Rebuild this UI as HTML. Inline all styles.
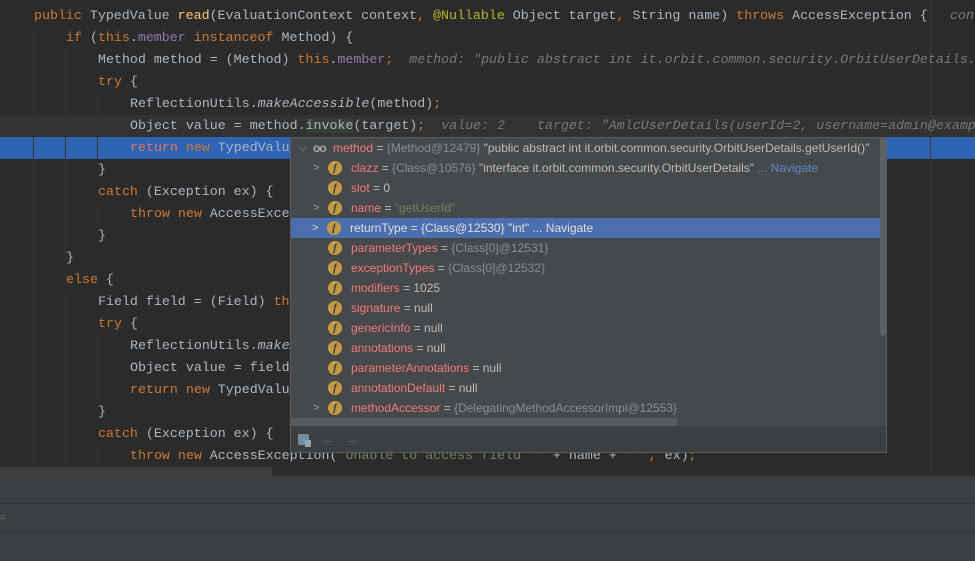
<!DOCTYPE html>
<html><head><meta charset="utf-8"><style>
*{margin:0;padding:0;box-sizing:border-box}
body{width:975px;height:561px;overflow:hidden;background:#2b2b2b;position:relative;font-family:"Liberation Mono",monospace}
.ed{position:absolute;left:0;top:0;width:975px;height:476px;background:#2b2b2b;overflow:hidden}
.ln{position:absolute;left:0;height:22px;line-height:22px;font-size:13.3px;color:#a9b7c6;white-space:pre;width:975px}
.k{color:#cc7832}.m{color:#ffc66d}.f{color:#9876aa}.a{color:#bbb529}.s{color:#6a8759}.i{font-style:italic}
.h{color:#787878;font-style:italic}
.g{position:absolute;width:1px;background:#363636}
.pop{position:absolute;left:290px;top:137px;width:597px;height:316px;background:#46494b;border:1px solid #5a5d5f;font-family:"Liberation Sans",sans-serif;font-size:12px;overflow:hidden}
.r{position:absolute;left:0;width:590px;height:20px;line-height:20px;white-space:nowrap;color:#bbbbbb}
.r .n{color:#f07a78}.r .gr{color:#8a8d8f}.r .gs{color:#6a8759}.r .nav{color:#5a8ac6}
.fi{position:absolute;left:37px;top:3px;width:14px;height:14px;border-radius:50%;background:#c29a44;color:#3c3f41;font-size:11px;line-height:14px;text-align:center;font-family:"Liberation Serif",serif;font-style:italic;font-weight:bold}
.ch{position:absolute;left:22px;top:0;color:#a0a0a0;font-size:11px}
.tx{position:absolute;left:60px}
</style></head><body>
<div class="ed">
<div style="position:absolute;left:0;top:115px;width:975px;height:22px;background:#323232"></div>
<div style="position:absolute;left:0;top:137px;width:975px;height:22px;background:#2f64b5"></div>
<div class="g" style="left:33px;top:27px;height:450px"></div>
<div class="g" style="left:65px;top:49px;height:210px"></div>
<div class="g" style="left:97px;top:93px;height:66px"></div>
<div class="g" style="left:97px;top:203px;height:22px"></div>
<div class="g" style="left:65px;top:291px;height:190px"></div>
<div class="g" style="left:97px;top:335px;height:66px"></div>
<div class="g" style="left:97px;top:445px;height:30px"></div>
<div style="position:absolute;left:930px;top:0;width:1px;height:476px;background:#3d3d3d"></div>
<div class="ln" style="top:5px;left:34px"><span class="k">public </span>TypedValue <span class="m">read</span>(EvaluationContext context<span class="k">, </span><span class="a">@Nullable </span>Object target<span class="k">, </span>String name) <span class="k">throws </span>AccessException {</div>
<div class="ln h" style="top:5px;left:950px">con</div>
<div class="ln" style="top:27px;left:66px"><span class="k">if </span>(<span class="k">this</span>.<span class="f">member </span><span class="k">instanceof </span>Method) {</div>
<div class="ln" style="top:49px;left:98px">Method method = (Method) <span class="k">this</span>.<span class="f">member</span><span class="k">;</span>  <span class="h">method: "public abstract int it.orbit.common.security.OrbitUserDetails.</span></div>
<div class="ln" style="top:71px;left:98px"><span class="k">try </span>{</div>
<div class="ln" style="top:93px;left:130px">ReflectionUtils.<span class="i">makeAccessible</span>(method)<span class="k">;</span></div>
<div class="ln" style="top:115px;left:130px">Object value = method.<span style="background:#344134">invoke</span>(target)<span class="k">;</span>  <span class="h">value: 2    target: "AmlcUserDetails(userId=2, username=admin@examp</span></div>
<div class="ln" style="top:137px;left:130px"><span style="color:#e8735a">return </span><span class="k">new </span>TypedValue(value)<span class="k">;</span></div>
<div class="ln" style="top:159px;left:98px">}</div>
<div class="ln" style="top:181px;left:98px"><span class="k">catch </span>(Exception ex) {</div>
<div class="ln" style="top:203px;left:130px"><span class="k">throw new </span>AccessException(<span class="s">"Unable to access method '" </span>+ name + <span class="s">"'"</span><span class="k">, </span>ex)<span class="k">;</span></div>
<div class="ln" style="top:225px;left:98px">}</div>
<div class="ln" style="top:247px;left:66px">}</div>
<div class="ln" style="top:269px;left:66px"><span class="k">else </span>{</div>
<div class="ln" style="top:291px;left:98px">Field field = (Field) <span class="k">this</span>.<span class="f">member</span><span class="k">;</span></div>
<div class="ln" style="top:313px;left:98px"><span class="k">try </span>{</div>
<div class="ln" style="top:335px;left:130px">ReflectionUtils.<span class="i">makeAccessible</span>(field)<span class="k">;</span></div>
<div class="ln" style="top:357px;left:130px">Object value = field.get(target)<span class="k">;</span></div>
<div class="ln" style="top:379px;left:130px"><span class="k">return new </span>TypedValue(value)<span class="k">;</span></div>
<div class="ln" style="top:401px;left:98px">}</div>
<div class="ln" style="top:423px;left:98px"><span class="k">catch </span>(Exception ex) {</div>
<div class="ln" style="top:445px;left:130px"><span class="k">throw new </span>AccessException(<span class="s">"Unable to access field '" </span>+ name + <span class="s">"'"</span><span class="k">, </span>ex)<span class="k">;</span></div>
<div class="ln" style="top:467px;left:98px">}</div>
<div style="position:absolute;left:0;top:467px;width:272px;height:9px;background:#3e3e3e"></div>
</div>
<div style="position:absolute;left:0;top:476px;width:975px;height:85px;background:#3c3f41"></div>
<div style="position:absolute;left:0;top:503px;width:975px;height:1px;background:#323232"></div>
<div style="position:absolute;left:0;top:531px;width:975px;height:1px;background:#323232"></div>
<div style="position:absolute;left:0;top:512px;color:#6a6a6a;font-size:9px;font-family:'Liberation Sans',sans-serif">≡</div>

<div class="pop">
<div class="r" style="top:0"><span style="position:absolute;left:8px;color:#a0a0a0;font-size:11px">⌵</span><span style="position:absolute;left:22px;color:#aaa;font-size:12px;font-weight:bold;letter-spacing:-1px">oo</span><span class="tx" style="left:42px"><span class="n">method</span> = <span class="gr">{Method@12479}</span> "public abstract int it.orbit.common.security.OrbitUserDetails.getUserId()"</span></div>
<div class="r" style="top:20px"><span class="ch">&gt;</span><span class="fi">f</span><span class="tx"><span class="n">clazz</span> = <span class="gr">{Class@10576}</span> "interface it.orbit.common.security.OrbitUserDetails" <span class="nav">... Navigate</span></span></div>
<div class="r" style="top:40px"><span class="fi">f</span><span class="tx"><span class="n">slot</span> = 0</span></div>
<div class="r" style="top:60px"><span class="ch">&gt;</span><span class="fi">f</span><span class="tx"><span class="n">name</span> = <span class="gs">"getUserId"</span></span></div>
<div class="r" style="top:80px;background:#4b6eaf;width:597px;left:-1px;color:#e0e0e0"><span class="ch" style="color:#ddd">&gt;</span><span class="fi">f</span><span class="tx">returnType = {Class@12530} "int" ... Navigate</span></div>
<div class="r" style="top:100px"><span class="fi">f</span><span class="tx"><span class="n">parameterTypes</span> = <span class="gr">{Class[0]@12531}</span></span></div>
<div class="r" style="top:120px"><span class="fi">f</span><span class="tx"><span class="n">exceptionTypes</span> = <span class="gr">{Class[0]@12532}</span></span></div>
<div class="r" style="top:140px"><span class="fi">f</span><span class="tx"><span class="n">modifiers</span> = 1025</span></div>
<div class="r" style="top:160px"><span class="fi">f</span><span class="tx"><span class="n">signature</span> = null</span></div>
<div class="r" style="top:180px"><span class="fi">f</span><span class="tx"><span class="n">genericInfo</span> = null</span></div>
<div class="r" style="top:200px"><span class="fi">f</span><span class="tx"><span class="n">annotations</span> = null</span></div>
<div class="r" style="top:220px"><span class="fi">f</span><span class="tx"><span class="n">parameterAnnotations</span> = null</span></div>
<div class="r" style="top:240px"><span class="fi">f</span><span class="tx"><span class="n">annotationDefault</span> = null</span></div>
<div class="r" style="top:260px"><span class="ch">&gt;</span><span class="fi">f</span><span class="tx"><span class="n">methodAccessor</span> = <span class="gr">{DelegatingMethodAccessorImpl@12553}</span></span></div>
<div style="position:absolute;left:0;top:280px;width:386px;height:8px;background:#585b5d"></div>
<div style="position:absolute;left:589px;top:0;width:6px;height:198px;background:#5e6163;border-radius:3px"></div>
<div style="position:absolute;left:0;top:288px;width:597px;height:28px;background:#3c3f41"></div>
<div style="position:absolute;left:7px;top:296px;width:11px;height:11px;background:#7a8a96"></div>
<div style="position:absolute;left:11px;top:300px;width:5px;height:5px;border-radius:50%;background:#3fa3d8"></div>
<div style="position:absolute;left:14px;top:302px;width:6px;height:7px;background:#9aa4aa"></div>
<div style="position:absolute;left:30px;top:293px;color:#5c5f61;font-size:15px">←</div>
<div style="position:absolute;left:53px;top:293px;color:#5c5f61;font-size:15px">→</div>
</div>
</body></html>
